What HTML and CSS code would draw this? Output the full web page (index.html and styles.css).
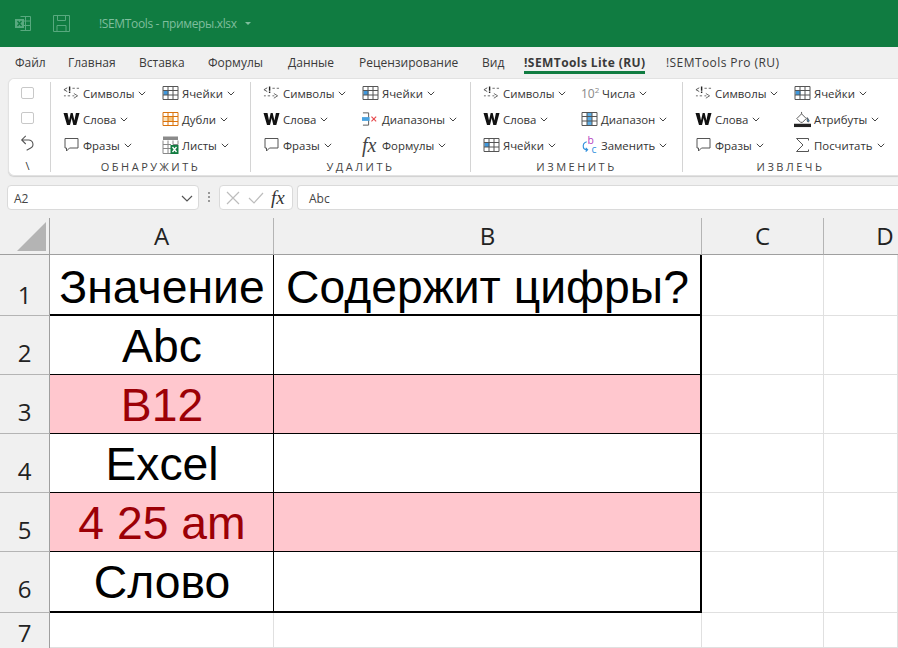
FILE: index.html
```html
<!DOCTYPE html>
<html lang="ru">
<head>
<meta charset="utf-8">
<title>!SEMTools - примеры.xlsx</title>
<link rel="stylesheet" href="styles.css">
</head>
<body>
<svg class="defs" width="0" height="0" aria-hidden="true">
  <defs>
    <symbol id="sym" viewBox="0 0 18 16"><path d="M4.500 2.500L1 4.500l3.500 2" fill="none" stroke="#555"/><path d="M7 1v4.500M7 6.500v1.500" stroke="#222" stroke-width="1.500"/><path d="M10 3h2.500M14.500 3H17M1 11h2M5 11h2.500M10 11h2M11.500 8.500l4 2.500-4 2.500" fill="none" stroke="#666"/></symbol>
    <symbol id="word" viewBox="0 0 16 16"><path d="M0 2h4l1.500 7.500L7.200 2h2l1.700 7.500L12.400 2H16l-3.200 12h-3L8.200 7l-1.700 7h-3z" fill="#111"/></symbol>
    <symbol id="phrase" viewBox="0 0 16 16"><path d="M1.500 1.500h13v9.500H6l-3 3v-3H1.500z" fill="#fff" stroke="#555"/></symbol>
    <symbol id="cells" viewBox="0 0 16 16"><rect x="1" y="5.500" width="5" height="4.500" fill="#3e97dc"/><path d="M.5 1.500h15v13H.5zM.5 5.500h15M.5 10h15M5.500 1.500v13M10.500 1.500v13" fill="none" stroke="#555"/></symbol>
    <symbol id="dup" viewBox="0 0 16 16"><rect x="1" y="1" width="14" height="14" fill="#fff"/><rect x="5" y="5" width="6" height="6" fill="#f8c77e"/><rect x="1" y="5" width="4" height="6" fill="#fbe3bb"/><path d="M.5 1.500h15v13H.5zM.5 5.500h15M.5 10.500h15M5.500 1.500v13M10.500 1.500v13" fill="none" stroke="#d9730d"/></symbol>
    <symbol id="sheets" viewBox="0 0 16 18"><rect x=".5" y=".5" width="15" height="3.500" fill="#8a8a8a"/><path d="M.5 4.500v13h8M.5 8.500h8M.5 12.500h8M5.500 4.500v13M10.500 4.500v4M15.500 4.500v4M10.500 8.500h5" fill="none" stroke="#888"/><rect x="8" y="9" width="8" height="9" fill="#127c41"/><path d="M10 11l4 5M14 11l-4 5" stroke="#fff" stroke-width="1.300"/></symbol>
    <symbol id="ranges" viewBox="0 0 18 16"><path d="M1 1.500h6v13H1" fill="none" stroke="#555"/><rect x="0" y="6" width="8" height="4" fill="#4aa3e0"/><path d="M10 5.500l5 5M15 5.500l-5 5" stroke="#e6484c" stroke-width="1.200"/></symbol>
    <symbol id="range2" viewBox="0 0 16 16"><rect x="5.500" y="1.500" width="5" height="13" fill="#5eaee6"/><path d="M.5 1.500h15v13H.5zM.5 5.500h15M.5 10h15M5.500 1.500v13M10.500 1.500v13" fill="none" stroke="#555"/></symbol>
    <symbol id="swap" viewBox="0 0 18 20"><text x="7" y="9" class="swb">b</text><text x="11" y="19" class="swc">c</text><path d="M6 6.500c-3 1-4 3.500-3.500 6 .3 1.500 2 2.500 4 2.500M5 13l2 2-2 2" fill="none" stroke="#2f8fdc" stroke-width="1.200"/></symbol>
    <symbol id="attr" viewBox="0 0 18 18"><rect x="0" y="13.500" width="18" height="3.500" fill="#222"/><path d="M3 8l5-5 5 5-4 4H7z" fill="#fff" stroke="#555"/><path d="M8 3V1M14 7c1 1.500 2 2.500 2 3.500a1 1 0 0 1-2 0z" stroke="#555" fill="#3a9ae0"/></symbol>
    <symbol id="undo" viewBox="0 0 18 18"><path d="M6.500 1L2 5.500 6.500 10M2.500 5.500h7a4.800 4.800 0 0 1 2.500 9L7.500 17" fill="none" stroke="#555" stroke-width="1.200"/></symbol>
    <symbol id="sigma" viewBox="0 0 16 16"><path d="M14 3.500V1.500H2L8.500 8 2 14.500h12v-2" fill="none" stroke="#555"/></symbol>
    <symbol id="chev" viewBox="0 0 8 5"><path d="M.8.8 4 4 7.200.8" fill="none" stroke="#444"/></symbol>
  </defs>
</svg>

<header class="titlebar">
  <svg class="tb-xl" width="17" height="17" viewBox="0 0 17 17"><path d="M5.500 1.500h10v14h-10M5.500 6h10M5.500 10.500h10M10.500 1.500v14" fill="none" stroke="#58a97f"/><rect x="0" y="4" width="9" height="9" fill="#58a97f"/><path d="M2.500 6l4 5M6.500 6l-4 5" stroke="#107c41" stroke-width="1.300"/></svg>
  <svg class="tb-save" width="17" height="17" viewBox="0 0 17 17"><path d="M.5.500h16v16H.5zM4.500.500v5h8v-5M4 16.500v-6h9v6" fill="none" stroke="#58a97f"/></svg>
  <span class="tb-name">!SEMTools - примеры.xlsx</span>
  <span class="tb-caret"></span>
</header>

<nav class="tabs">
  <span class="tab t1">Файл</span>
  <span class="tab t2">Главная</span>
  <span class="tab t3">Вставка</span>
  <span class="tab t4">Формулы</span>
  <span class="tab t5">Данные</span>
  <span class="tab t6">Рецензирование</span>
  <span class="tab t7">Вид</span>
  <span class="tab t8 active">!SEMTools Lite (RU)</span>
  <span class="tab t9">!SEMTools Pro (RU)</span>
</nav>

<section class="ribbon">
  <div class="mini">
    <span class="check"></span>
    <span class="check"></span>
    <svg class="undo" width="18" height="18"><use href="#undo"/></svg>
    <span class="slash">\</span>
  </div>

  <div class="group g1">
    <div class="cols">
      <div class="item"><svg class="ic" width="18" height="16"><use href="#sym"/></svg>Символы<svg class="ch" width="8" height="5"><use href="#chev"/></svg></div>
      <div class="item"><svg class="ic" width="16" height="16"><use href="#cells"/></svg>Ячейки<svg class="ch" width="8" height="5"><use href="#chev"/></svg></div>
      <div class="item"><svg class="ic" width="16" height="16"><use href="#word"/></svg>Слова<svg class="ch" width="8" height="5"><use href="#chev"/></svg></div>
      <div class="item"><svg class="ic" width="16" height="16"><use href="#dup"/></svg>Дубли<svg class="ch" width="8" height="5"><use href="#chev"/></svg></div>
      <div class="item"><svg class="ic" width="16" height="16"><use href="#phrase"/></svg>Фразы<svg class="ch" width="8" height="5"><use href="#chev"/></svg></div>
      <div class="item"><svg class="ic" width="16" height="18"><use href="#sheets"/></svg>Листы<svg class="ch" width="8" height="5"><use href="#chev"/></svg></div>
    </div>
    <div class="glabel">ОБНАРУЖИТЬ</div>
  </div>

  <div class="group g2">
    <div class="cols">
      <div class="item"><svg class="ic" width="18" height="16"><use href="#sym"/></svg>Символы<svg class="ch" width="8" height="5"><use href="#chev"/></svg></div>
      <div class="item"><svg class="ic" width="16" height="16"><use href="#cells"/></svg>Ячейки<svg class="ch" width="8" height="5"><use href="#chev"/></svg></div>
      <div class="item"><svg class="ic" width="16" height="16"><use href="#word"/></svg>Слова<svg class="ch" width="8" height="5"><use href="#chev"/></svg></div>
      <div class="item"><svg class="ic" width="18" height="16"><use href="#ranges"/></svg>Диапазоны<svg class="ch" width="8" height="5"><use href="#chev"/></svg></div>
      <div class="item"><svg class="ic" width="16" height="16"><use href="#phrase"/></svg>Фразы<svg class="ch" width="8" height="5"><use href="#chev"/></svg></div>
      <div class="item"><span class="ic fx">fx</span>Формулы<svg class="ch" width="8" height="5"><use href="#chev"/></svg></div>
    </div>
    <div class="glabel">УДАЛИТЬ</div>
  </div>

  <div class="group g3">
    <div class="cols">
      <div class="item"><svg class="ic" width="18" height="16"><use href="#sym"/></svg>Символы<svg class="ch" width="8" height="5"><use href="#chev"/></svg></div>
      <div class="item"><span class="ic pow">10<sup>2</sup></span>Числа<svg class="ch" width="8" height="5"><use href="#chev"/></svg></div>
      <div class="item"><svg class="ic" width="16" height="16"><use href="#word"/></svg>Слова<svg class="ch" width="8" height="5"><use href="#chev"/></svg></div>
      <div class="item"><svg class="ic" width="16" height="16"><use href="#range2"/></svg>Диапазон<svg class="ch" width="8" height="5"><use href="#chev"/></svg></div>
      <div class="item"><svg class="ic" width="16" height="16"><use href="#cells"/></svg>Ячейки<svg class="ch" width="8" height="5"><use href="#chev"/></svg></div>
      <div class="item"><svg class="ic" width="18" height="20"><use href="#swap"/></svg>Заменить<svg class="ch" width="8" height="5"><use href="#chev"/></svg></div>
    </div>
    <div class="glabel">ИЗМЕНИТЬ</div>
  </div>

  <div class="group g4">
    <div class="cols">
      <div class="item"><svg class="ic" width="18" height="16"><use href="#sym"/></svg>Символы<svg class="ch" width="8" height="5"><use href="#chev"/></svg></div>
      <div class="item"><svg class="ic" width="16" height="16"><use href="#cells"/></svg>Ячейки<svg class="ch" width="8" height="5"><use href="#chev"/></svg></div>
      <div class="item"><svg class="ic" width="16" height="16"><use href="#word"/></svg>Слова<svg class="ch" width="8" height="5"><use href="#chev"/></svg></div>
      <div class="item"><svg class="ic" width="17" height="17"><use href="#attr"/></svg>Атрибуты<svg class="ch" width="8" height="5"><use href="#chev"/></svg></div>
      <div class="item"><svg class="ic" width="16" height="16"><use href="#phrase"/></svg>Фразы<svg class="ch" width="8" height="5"><use href="#chev"/></svg></div>
      <div class="item"><svg class="ic" width="16" height="16"><use href="#sigma"/></svg>Посчитать<svg class="ch" width="8" height="5"><use href="#chev"/></svg></div>
    </div>
    <div class="glabel">ИЗВЛЕЧЬ</div>
  </div>
</section>

<section class="fbar">
  <div class="namebox"><span>A2</span><svg width="12" height="7" viewBox="0 0 12 7"><path d="M1 1l5 5 5-5" fill="none" stroke="#555" stroke-width="1.200"/></svg></div>
  <div class="grip"></div>
  <div class="fbtns">
    <svg width="14" height="14" viewBox="0 0 14 14"><path d="M1 1l12 12M13 1L1 13" stroke="#bdbdbd" stroke-width="1.200"/></svg>
    <svg width="16" height="14" viewBox="0 0 16 14"><path d="M1 7l5 5 9-10" fill="none" stroke="#bdbdbd" stroke-width="1.200"/></svg>
    <span class="fxb">fx</span>
  </div>
  <div class="finput">Abc</div>
</section>

<main class="sheet">
  <div class="corner"><span class="tri"></span></div>
  <div class="ch-cell">A</div><div class="ch-cell">B</div><div class="ch-cell">C</div><div class="ch-cell nb">D</div>

  <div class="rh r1">1</div>
  <div class="c head">Значение</div><div class="c head tr">Содержит цифры?</div><div class="c"></div><div class="c"></div>

  <div class="rh">2</div>
  <div class="c d">Abc</div><div class="c d tr"></div><div class="c"></div><div class="c"></div>

  <div class="rh">3</div>
  <div class="c d bad">B12</div><div class="c d bad tr"></div><div class="c"></div><div class="c"></div>

  <div class="rh">4</div>
  <div class="c d">Excel</div><div class="c d tr"></div><div class="c"></div><div class="c"></div>

  <div class="rh">5</div>
  <div class="c d bad">4 25 am</div><div class="c d bad tr"></div><div class="c"></div><div class="c"></div>

  <div class="rh r6">6</div>
  <div class="c d last">Слово</div><div class="c d last tr"></div><div class="c"></div><div class="c"></div>

  <div class="rh r7">7</div>
  <div class="c"></div><div class="c"></div><div class="c"></div><div class="c"></div>
</main>
</body>
</html>
```
FILE: styles.css
```css
* { box-sizing: border-box; }
html, body { margin: 0; padding: 0; }
body {
  width: 898px; height: 648px; overflow: hidden;
  background: #f0f0f0;
  font-family: "Open Sans", "Noto Sans", sans-serif;
  font-size: 12px; color: #333;
}
.defs { display: block; height: 0; }
.swb { font: 11px "Open Sans", sans-serif; fill: #b43fc0; }
.swc { font: 11px "Open Sans", sans-serif; fill: #2f8fdc; }

.titlebar {
  height: 47px; background: #107c41; display: flex; align-items: center;
  padding-left: 15px; color: #7fbe9d;
}
.tb-save { margin-left: 21px; }
.tb-name { margin-left: 29px; font-size: 12px; letter-spacing: -.35px; }
.tb-caret {
  margin-left: 8px; width: 0; height: 0;
  border-left: 3px solid transparent; border-right: 3px solid transparent; border-top: 3px solid #7fbe9d;
}

.tabs { height: 31px; display: flex; align-items: flex-start; padding-top: 7px; font-size: 12px; color: #3a3a3a; }
.tab { display: block; height: 24px; white-space: nowrap; flex: none; }
.t1 { margin-left: 15px; width: 53px; }
.t2 { width: 71px; }
.t3 { width: 69px; }
.t4 { width: 80px; }
.t5 { width: 71px; }
.t6 { width: 123px; }
.t7 { width: 42px; }
.t8 { width: 121px; margin-right: 21px; font-weight: 700; letter-spacing: .42px; position: relative; }
.t9 { letter-spacing: .42px; }
.active::after {
  content: ""; position: absolute; left: 0; right: 0; top: 17px; height: 3px; background: #107c41;
}

.ribbon {
  height: 98px; margin-left: 8px; background: #fff; border: 1px solid #e2e2e2; border-right: 0;
  border-radius: 6px 0 0 6px; display: flex;
  box-shadow: 0 1px 1px #d0d0d0;
}
.mini {
  width: 42px; height: 90px; margin-top: 3px; border-right: 1px solid #d4d4d4;
  display: flex; flex-direction: column; align-items: center; padding-right: 4px;
}
.check { width: 13px; height: 13px; border: 1px solid #c8c8c8; border-radius: 2px; margin: 5px 0 8px; }
.undo { margin-top: 3px; }
.slash { font-size: 11px; line-height: 12px; margin-top: 9px; }
.group { height: 90px; margin-top: 3px; border-right: 1px solid #d4d4d4; padding-left: 12px; flex: none; }
.g1 { width: 200px; }
.g2 { width: 220px; }
.g3 { width: 212px; }
.g4 { width: 215px; border-right: 0; }
.cols { display: grid; grid-auto-rows: 26px; height: 79px; margin-top: -2px; }
.g1 .cols, .g2 .cols, .g4 .cols { grid-template-columns: 99px 1fr; }
.g3 .cols { grid-template-columns: 98px 1fr; }
.item { display: flex; align-items: center; white-space: nowrap; color: #333; font-size: 11.4px; }
.ic { flex: none; margin-right: 3px; width: 17px; }
.ch { margin-left: 4px; flex: none; }
.fx { font: italic 20px "Liberation Serif", serif; color: #444; line-height: 20px; }
.pow { font-size: 12px; color: #888; width: 18px; }
.pow sup { font-size: 8px; line-height: 0; }
.glabel { text-align: center; font-size: 11px; letter-spacing: 2.5px; color: #444; line-height: 14px; padding-right: 12px; margin-top: 1px; }

.fbar { height: 25px; margin-top: 9px; display: flex; align-items: stretch; padding-left: 7px; }
.namebox, .fbtns, .finput { background: #fff; border: 1px solid #dadada; border-radius: 4px; }
.namebox { width: 192px; display: flex; align-items: center; justify-content: space-between; padding: 1px 5px 0 6px; font-size: 12px; color: #444; }
.grip { width: 2px; margin: 7px 0 6px 9px; background: repeating-linear-gradient(#999 0 2px, transparent 2px 4px); }
.fbtns { width: 74px; margin-left: 9px; display: flex; align-items: center; gap: 8px; padding-left: 6px; }
.fxb { font: italic 19px "Liberation Serif", serif; color: #333; margin-left: -1px; }
.finput { flex: 1; margin-left: 4px; border-right: 0; border-radius: 4px 0 0 4px; padding: 1px 0 0 11px; display: flex; align-items: center; color: #444; font-size: 12px; }

.sheet {
  margin-top: 8px; display: grid;
  grid-template-columns: 50px 224px 428px 122px 74px;
  grid-template-rows: 37px 61px 59px 59px 59px 59px 61px 35px;
  background: #fff;
}
.corner { background: #f0f0f0; border-right: 1px solid #9f9f9f; border-bottom: 1px solid #9f9f9f; padding: 4px 3px 3px 17px; }
.tri { display: block; width: 29px; height: 29px; background: #b4b4b4; clip-path: polygon(100% 0, 100% 100%, 0 100%); }
.ch-cell {
  background: #f0f0f0; border-right: 1px solid #b4b4b4; border-bottom: 1px solid #9f9f9f;
  display: flex; align-items: center; justify-content: center; font-size: 24px; color: #222; padding-bottom: 2px;
}
.ch-cell.nb { border-right: 0; padding-left: 48px; }
.rh {
  background: #f0f0f0; border-right: 1px solid #9f9f9f; border-bottom: 1px solid #b4b4b4;
  display: flex; align-items: flex-end; justify-content: center; font-size: 24px; color: #222; line-height: 30px; padding-bottom: 6px;
}
.rh.r1 { padding-bottom: 5px; }
.rh.r6 { padding-bottom: 8px; }
.rh.r7 { padding-bottom: 0; border-bottom: 0; }
.c {
  border-right: 1px solid #e0e0e0; border-bottom: 1px solid #e0e0e0; background: #fff;
  display: flex; align-items: flex-end; justify-content: center;
  font-family: "Liberation Sans", Arial, sans-serif; font-size: 46.3px; color: #000; line-height: 50px; white-space: nowrap; padding: 0 0 3px 1px;
}
.head, .d { border-right-color: #000; border-bottom-color: #000; }
.head { border-bottom-width: 2px; padding-bottom: 2px; }
.tr { border-right-width: 2px; }
.last { border-bottom-width: 2px; padding-bottom: 4px; }
.bad { background: #ffc7ce; color: #9c0006; }
```
